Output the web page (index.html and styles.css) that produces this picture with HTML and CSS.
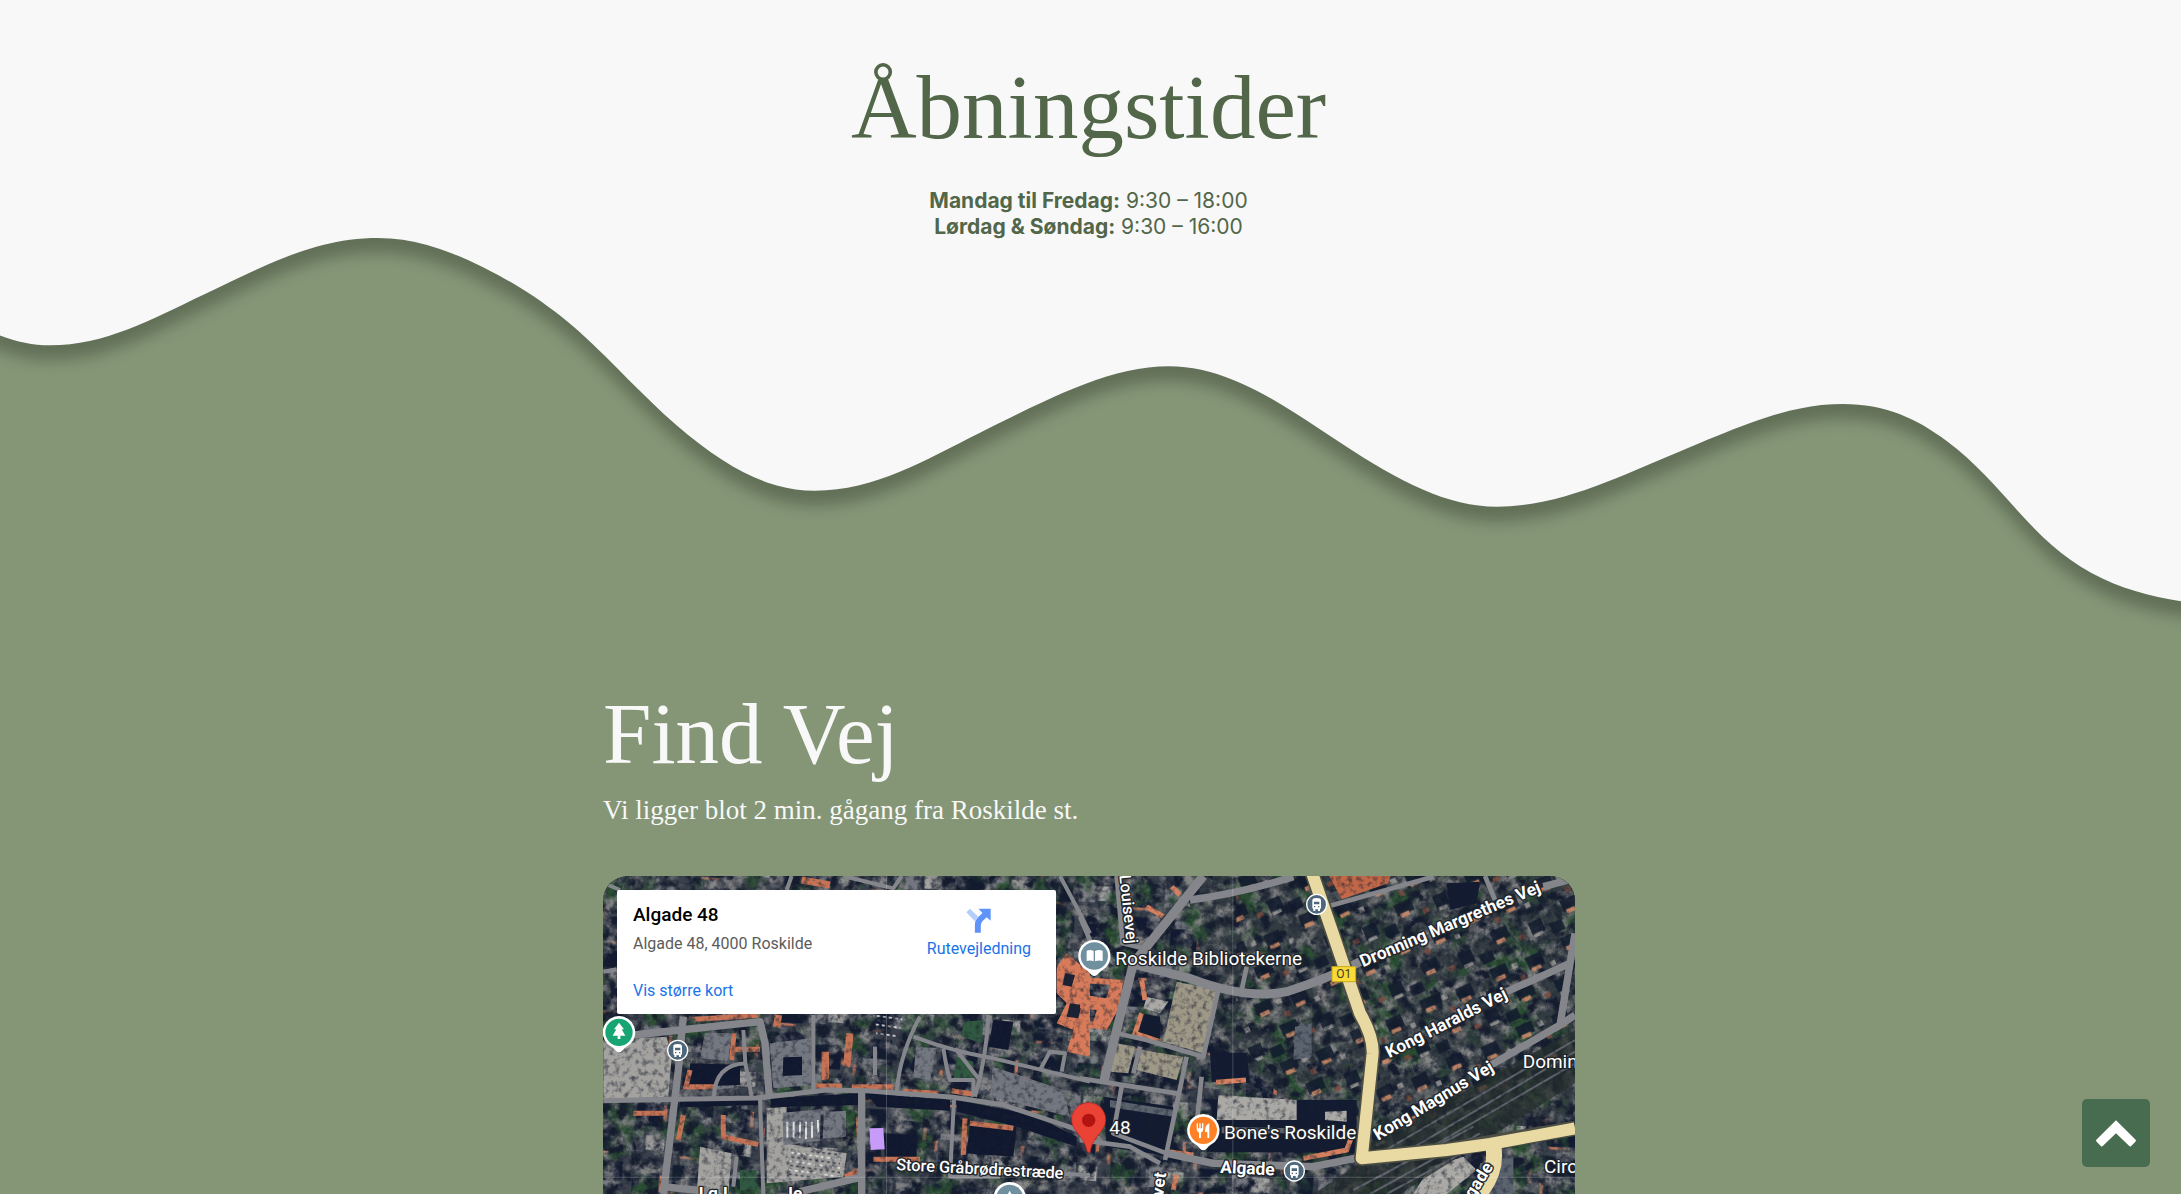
FILE: index.html
```html
<!DOCTYPE html>
<html lang="da">
<head>
<meta charset="utf-8">
<meta name="viewport" content="width=device-width, initial-scale=1">
<title>Åbningstider og Find Vej</title>
<link rel="stylesheet" href="styles.css">
</head>
<body>
<main class="page">
  <section class="hours">
    <h1 class="display hours-title">Åbningstider</h1>
    <p class="hours-list"><strong>Mandag til Fredag:</strong> 9:30 – 18:00<br><strong>Lørdag &amp; Søndag:</strong> 9:30 – 16:00</p>
  </section>

  <svg class="wave" viewBox="0 230 2181 380" aria-hidden="true">
    <path fill="#f8f8f8" d="M-40 200V318L0 335.500C17 342 33 345.300 50 345.300C105 345.300 150 320 205 294C265 265.500 315 238 378 238C420 238 460 254.500 498 275C540 297.500 572 323 605 356C639 390 667 419.500 700 444.300C740 474.500 775 490.700 815 490.700C875 490.700 925 460 979 433.300C1050 398 1110 366.300 1169 366.300C1230 366.300 1285 406 1342 443.700C1400 482 1448 506.700 1497 506.700C1555 506.700 1610 481 1669 456C1745 424 1790 404 1843 404C1885 404 1917 418.500 1947 441.300C1975 462 1998 489 2019 512.300C2040 535.500 2062 557 2091 572.700C2120 588.700 2150 596 2181 601.300L2230 610V200Z"/>
  </svg>

  <section class="find">
    <h2 class="display find-title">Find Vej</h2>
    <p class="find-lead">Vi ligger blot 2 min. gågang fra Roskilde st.</p>

    <div class="map">
      <svg class="map-canvas" viewBox="0 0 2916 954" preserveAspectRatio="xMinYMin slice" role="img" aria-label="Satellitkort over Roskilde">
        <defs>
          <filter id="grain" x="0" y="0" width="100%" height="100%" color-interpolation-filters="sRGB">
            <feTurbulence type="fractalNoise" baseFrequency="0.022" numOctaves="5" seed="7"/>
            <feColorMatrix values="0 0 0 0 .52  0 0 0 0 .52  0 0 0 0 .52  3 0 0 0 -1.3"/>
          </filter>
          <filter id="dark" x="0" y="0" width="100%" height="100%" color-interpolation-filters="sRGB">
            <feTurbulence type="fractalNoise" baseFrequency="0.025" numOctaves="5" seed="21"/>
            <feColorMatrix values="0 0 0 0 .08  0 0 0 0 .11  0 0 0 0 .18  0 4 0 0 -1.9"/>
          </filter>
          <filter id="green" x="0" y="0" width="100%" height="100%" color-interpolation-filters="sRGB">
            <feTurbulence type="fractalNoise" baseFrequency="0.01" numOctaves="4" seed="4"/>
            <feColorMatrix values="0 0 0 0 .17  0 0 0 0 .31  0 0 0 0 .2  0 0 5 0 -2.5"/>
          </filter>
          <filter id="speckle" x="0" y="0" width="100%" height="100%" color-interpolation-filters="sRGB">
            <feTurbulence type="fractalNoise" baseFrequency="0.06" numOctaves="3" seed="13"/>
            <feColorMatrix values="0 0 0 0 .1  0 0 0 0 .12  0 0 0 0 .18  1.6 0 0 0 -.75"/>
          </filter>
          <pattern id="houses" width="230" height="190" patternUnits="userSpaceOnUse" patternTransform="rotate(-24)">
            <path fill="#101a2c" d="M14 8h52v34H14zM126 20h50v40h-50zM60 96h54v36H60zM176 118h42v40h-42zM4 146h40v32H4z"/>
            <path fill="#d08b68" d="M22 38h30v13H22zM132 55h30v12h-30zM68 127h28v13H68z"/>
            <path fill="#9c9a98" d="M80 20h18v16H80zM180 156h28v10h-28zM190 60h16v16h-16z"/>
            <path fill="#7c4b3e" d="M90 64h16v16H90zM134 142h20v14h-20z"/>
          </pattern>
          <pattern id="blocks" width="260" height="210" patternUnits="userSpaceOnUse" patternTransform="rotate(4)">
            <path fill="#111a30" d="M10 10h110v60H10zM150 40h80v70h-80zM20 120h90v70H20z"/>
            <path fill="#747780" d="M24 70h90v18H24zM160 16h60v22h-60zM126 126h50v60h-50z"/>
            <path fill="#c0745a" d="M8 90h10v36H8zM232 44h10v50h-10zM28 192h60v8H28z"/>
            <path fill="#a5a4a3" d="M184 136h56v44h-56z"/>
          </pattern>
          <pattern id="cars" width="18" height="26" patternUnits="userSpaceOnUse" patternTransform="rotate(8)">
            <path fill="#e4e4e4" d="M2 3h9v5H2z"/><path fill="#3b414d" d="M4 16h9v5H4z"/>
          </pattern>
          <g id="bus">
            <circle r="30" fill="#4f677b" stroke="#fff" stroke-width="4"/>
            <path fill="#fff" fill-rule="evenodd" d="M-13-12q0-7 13-7t13 7v22q0 3-3 4v6h-6v-5h-8v5h-6v-6q-3-1-3-4zM-8-8V0H8v-8zM-8 5v4h4V5zM4 5v4h4V5z"/>
          </g>
        </defs>

        <rect width="2940" height="960" fill="#3a414c"/>
        <rect width="2940" height="960" fill="url(#blocks)"/>
        <path fill="#333c42" d="M1740 0H2940V700L2300 860L1860 520Z"/>
        <rect width="2940" height="960" filter="url(#green)"/>
        <rect width="2940" height="960" filter="url(#grain)"/>
        <rect width="2940" height="960" filter="url(#dark)"/>
        <path fill="url(#houses)" opacity=".85" d="M1900 0H2940V560L2300 850L1900 500Z"/>

        <g transform="translate(-9 -18)">
          <path fill="#a3a29f" d="M10 510L200 500L215 560L205 680L10 688Z M300 830L395 850L385 972H290Z M500 715L560 710L555 820L740 850L730 920L500 940Z"/>
          <path fill="#737780" d="M315 488L395 490L385 572L300 565Z M510 520L632 505L636 645L520 655Z M548 728L662 718L660 812L550 826Z M672 726L738 722V800L668 806Z M948 530L1010 535L990 632L940 620Z M1178 590L1390 660L1410 740L1170 680Z M350 630L395 632V655L350 658Z"/>
          <path fill="#101830" d="M270 580L420 585V645L265 650Z M550 562L606 560V615L548 618Z M240 690L480 690V705L240 712Z M510 685L780 670V705L515 712Z M800 670L1050 690V722L830 710Z M850 790L950 795V865L855 868Z M1110 760L1250 770L1240 860L1100 850Z M1180 450L1240 455L1225 540L1165 530Z M1070 690L1300 735L1430 800V830L1250 770L1070 725Z"/>
          <g fill="none" stroke="#c77456" stroke-width="15">
            <path d="M285 448L475 436M270 600L258 650H345M402 490L395 570M395 538H480M640 648H725M755 650H880M910 664L1015 670M1055 662L1118 672M370 735V800L475 824M775 740L782 900L735 920M1095 745L1090 855M1110 760L1240 775M820 868H960M100 730H200M250 735L235 810"/>
            <path stroke-width="22" d="M535 435L530 472M750 490L740 590M676 545V630M605 30L690 45"/>
          </g>
          <path fill="#d87b5a" d="M1370 290L1400 250L1470 310V560L1400 545L1420 480L1370 460L1400 400L1370 370Z"/>
          <path fill="#1b2233" d="M1395 310L1425 315L1415 350L1388 345Z M1410 400L1445 405L1435 445L1400 440Z"/>
          <path fill="none" stroke="#e2e0de" stroke-width="6" d="M562 755v48M581 755v48M600 755v48M618 755v52M636 755v48M654 750v40"/>
          <path fill="url(#cars)" d="M575 840L720 850V920L560 925Z M820 435H910L890 520L830 500Z"/>
          <path fill="#315941" d="M1090 455L1150 450L1145 520L1085 500Z M1070 560L1120 575V625H1060Z M420 900H470V960H420Z"/>
        </g>
        <g transform="translate(1431 -18)">
          <path fill="#9e9887" d="M290 335L410 360L370 550L250 515Z M185 540L310 560L290 630L170 600Z M110 520L165 530L145 610L90 605Z"/>
          <path fill="#d87b5a" fill-rule="evenodd" d="M0 320L130 330L120 410L80 480L0 470ZM20 340L90 345L80 385L15 375ZM0 415L50 420L40 455L0 450Z"/>
          <path fill="#c26848" d="M748 18H930L925 40L785 88Z"/>
          <path fill="#121b31" d="M390 545L500 550L510 640L395 635Z M400 690H830V850L380 845Z M70 680L280 710V860L80 830Z M180 430L240 440V515L180 500Z M1100 40L1200 35L1190 100L1110 120Z"/>
          <path fill="#aaa9a5" d="M415 675L650 690V750L410 750Z M735 725L800 722V755L735 750Z M200 380L265 395L240 430L190 415Z M1050 890L1150 860L1190 900L1100 972H1000Z"/>
          <path fill="none" stroke="#d5815f" stroke-width="15" d="M185 430L165 490L240 515M185 330L195 390M408 637L498 630M670 865L800 840L815 800M265 845L340 855M290 915L280 960M200 110L250 140M275 50L300 75"/>
          <path fill="#5b636f" d="M645 470L695 460V560L640 570Z M425 770L640 775V790H425Z M90 690L280 720V740L90 712Z M1200 880L1300 860V972H1190Z"/>
          <path fill="#27302e" d="M850 830L1485 480V640L960 972H700L840 880Z" opacity=".75"/>
          <g fill="none" stroke="#5e636b" stroke-width="6"><path d="M900 850L1485 510M920 880L1485 545M900 920L1485 580M820 960L1180 770M870 972L1200 790M920 972L1210 815"/></g>
        </g>
        <rect width="2940" height="960" filter="url(#speckle)"/>

        <g transform="translate(-9 -18)">
          <g fill="none" stroke="#85868b" stroke-linejoin="round">
            <path stroke-width="22" d="M100 495L240 480L480 455L495 520L508 680M250 440L235 600L190 972M785 665V972M190 950L330 965M600 965L790 920"/>
            <path stroke-width="15" d="M10 692L230 688L470 684L680 660L800 662L1060 682L1210 705L1310 738L1430 778"/>
            <path stroke-width="12" d="M430 480L436 580L455 680M436 580Q345 585 342 680M640 435V660M960 440Q900 550 890 665M940 500Q1060 545 1180 565L1470 635M1165 435Q1160 560 1125 680M1030 535Q1040 600 1050 630H1120V680M1065 535L1135 625M480 690L490 972M1062 690L1050 920H1200M1320 600L1350 545L1395 550L1385 605M575 18L560 60M1380 18Q1430 110 1470 190M730 18L880 55L905 18M25 45L60 60M10 305L50 298M825 530V615M410 860L400 950M1200 905L1470 915"/>
          </g>
          <path fill="#c79bf8" d="M808 775L850 774L854 838L812 840Z"/>
          <path fill="#fff" opacity=".2" d="M858 18h3v954h-3zM9 920h1461v3H9z"/>
        </g>

        <g transform="translate(1431 -18)">
          <g fill="none" stroke="#85868b" stroke-linejoin="round">
            <path stroke-width="27" d="M370 18L160 280L70 640M170 285L330 325Q500 390 620 365Q760 320 840 275"/>
            <path stroke-width="22" d="M330 90Q480 70 640 20M260 850L400 880L700 890L850 860M1280 365L1470 280M1225 590L1440 465L1485 435M1485 190L1440 465M1390 50L1485 25"/>
            <path stroke-width="14" d="M110 18L128 220L210 240M0 140L50 260M110 490L200 510L370 560L415 360M740 110L1060 20M320 560L255 870M0 625L290 670M125 650L100 790L260 850M500 290L485 360M0 810L150 830L240 880M365 620L350 760M180 530L160 610M1215 18L1245 90"/>
          </g>
          <path fill="none" stroke="#4d4f44" stroke-width="46" stroke-linejoin="round" d="M693 0L755 180L840 430Q880 500 878 550L845 865L1100 840L1485 775M1245 850Q1240 920 1180 990"/>
          <path fill="none" stroke="#e9daa4" stroke-width="36" stroke-linejoin="round" d="M693 0L755 180L840 430Q880 500 878 550L845 865L1100 840L1230 822L1485 775"/>
          <path fill="none" stroke="#e9daa4" stroke-width="48" d="M1240 830Q1255 920 1170 1000"/>
          <path fill="#fff" opacity=".2" d="M457 18h3v954h-3zM0 920h1485v3H0z"/>
        </g>

        <g class="map-labels">
          <g transform="translate(-9 -18)">
            <text class="map-street-small" transform="translate(888 900) rotate(3)">Store Gråbrødrestræde</text>
            <text x="296" y="988">Lg.L</text>
            <text x="565" y="988">le</text>
          </g>
          <g transform="translate(1431 -18)">
            <text class="map-street-small" transform="translate(118 16) rotate(84)">Louisevej</text>
            <text transform="translate(849 292) rotate(-23)">Dronning Margrethes Vej</text>
            <text transform="translate(928 565) rotate(-27)">Kong Haralds Vej</text>
            <text transform="translate(894 812) rotate(-31)">Kong Magnus Vej</text>
            <text transform="translate(420 908) rotate(3)">Algade</text>
            <text transform="translate(246 1000) rotate(-82)">rvet</text>
            <text transform="translate(1180 988) rotate(-58)">gade</text>
            <g class="map-places">
              <text x="106" y="284">Roskilde Bibliotekerne</text>
              <text x="432" y="808">Bone's Roskilde</text>
              <text x="88" y="791">48</text>
              <text x="1328" y="594">Domin</text>
              <text x="1392" y="909">Circ</text>
            </g>
          </g>
        </g>

        <g transform="translate(-9 -18)">
          <path fill="#fff" d="M57 438a49 49 0 0 1 34 84q-18 11-26 22q-8 6-16 0q-8-11-26-22a49 49 0 0 1 34-84z"/>
          <circle cx="57" cy="487" r="41" fill="#17a673"/>
          <path fill="#fff" d="M57 458l15 20h-7l11 19H61v10h-8v-10H38l11-19h-7z"/>
          <use href="#bus" x="233" y="541"/>
          <path fill="#fff" d="M1229 936a49 49 0 0 1 49 49h-98a49 49 0 0 1 49-49z"/>
          <circle cx="1229" cy="985" r="41" fill="#71909f"/>
          <path fill="#fff" d="M1229 962l10 20h-20z"/>
        </g>
        <g transform="translate(1431 -18)">
          <use href="#bus" x="710" y="103"/>
          <use href="#bus" x="643" y="903"/>
          <path fill="#fff" d="M43 209a49 49 0 0 1 34 84q-18 11-26 22q-8 6-16 0q-8-11-26-22a49 49 0 0 1 34-84z"/>
          <circle cx="43" cy="258" r="41" fill="#71909f"/>
          <path fill="#fff" d="M20 242q12-5 21 1v31q-10-5-21-1zM45 243q10-6 23-1v31q-12-4-23 1z"/>
          <path fill="#fff" d="M370 732a49 49 0 0 1 34 84q-18 11-26 22q-8 6-16 0q-8-11-26-22a49 49 0 0 1 34-84z"/>
          <circle cx="370" cy="781" r="41" fill="#ff8126"/>
          <path fill="#fff" d="M350 760h4v15h4v-15h4v15h4v-15h4v18q0 8-7 10v16h-6v-16q-7-2-7-10zM375 784q0-20 13-24v44h-6v-18h-7z"/>
          <path fill="#ea4335" stroke="#c5221f" stroke-width="2" d="M26 698a51 51 0 0 1 51 51c0 35-38 48-46 94q-5 10-10 0c-8-46-46-59-46-94a51 51 0 0 1 51-51z"/>
          <circle cx="26" cy="751" r="20" fill="#b31412"/>
          <rect x="756" y="290" width="71" height="45" fill="#f9da36" stroke="#c9a913" stroke-width="3"/>
          <text class="map-shield" x="791" y="325">O1</text>
        </g>
      </svg>

      <div class="map-card">
        <div class="map-card-place">
          <h3 class="map-card-title">Algade 48</h3>
          <p class="map-card-address">Algade 48, 4000 Roskilde</p>
          <a class="map-card-link" href="#kort">Vis større kort</a>
        </div>
        <a class="map-card-route" href="#rute">
          <svg class="route-icon" viewBox="0 0 76 76" aria-hidden="true">
            <path fill="#b5cffb" d="M1 13L12 2L37 26L27 40Z"/>
            <path fill="#5e94f9" d="M27 75V50Q27 38 36 29L50 15L38 2H75V39L63 28L50 40Q45 45 45 54V75Z"/>
          </svg>
          Rutevejledning
        </a>
      </div>
    </div>
  </section>
</main>

<button class="to-top" type="button" aria-label="Til toppen">
  <svg class="to-top-icon" viewBox="0 0 120 80" aria-hidden="true"><path fill="#fff" d="M60 0L119 59Q121 62 118 65L105 78Q102 80 99 77L60 39L21 77Q18 80 15 78L2 65Q-1 62 1 59Z"/></svg>
</button>
</body>
</html>
```
FILE: styles.css
```css
* {
  box-sizing: border-box;
}

body {
  margin: 0;
  background: #849676;
  color: #52664a;
  font-family: Inter, "Liberation Sans", sans-serif;
}

h1,
h2,
h3,
p {
  margin: 0;
}

.page {
  display: flex;
  flex-direction: column;
  min-height: 100vh;
  overflow: hidden;
}

.display {
  font-family: "Liberation Serif", serif;
  font-weight: 400;
  line-height: 96px;
}

.hours {
  position: relative;
  z-index: 1;
  height: 230px;
  padding: 60px 28px 0 24px;
  background: #f8f8f8;
  text-align: center;
}

.hours-title {
  font-size: 91px;
}

.hours-list {
  margin-top: 32px;
  font-size: 21px;
  line-height: 26px;
}

.hours-list strong {
  font-weight: 700;
}

.wave {
  display: block;
  width: 100%;
  overflow: visible;
  filter: drop-shadow(0 15px 7px rgba(0, 0, 0, 0.25));
}

.find {
  width: 975px;
  max-width: 100%;
  margin: 76px auto 0;
  padding-right: 3px;
  color: #f8f8f8;
}

.find-title {
  font-size: 87px;
}

.find-lead {
  margin-top: 12px;
  font-family: "Liberation Serif", serif;
  font-size: 27px;
  line-height: 32px;
}

.map {
  position: relative;
  height: 318px;
  margin-top: 50px;
  overflow: hidden;
  border-radius: 25px 25px 0 0;
  font-family: Roboto, "Liberation Sans", sans-serif;
}

.map-canvas {
  display: block;
  width: 100%;
  height: 100%;
}

.map-labels {
  fill: #fff;
  stroke: #20242b;
  stroke-width: 8px;
  stroke-linejoin: round;
  paint-order: stroke;
  font-size: 52px;
  font-weight: 700;
}

.map-street-small {
  font-size: 49px;
  font-weight: 500;
}

.map-places {
  font-size: 57px;
  font-weight: 400;
}

.map-shield {
  fill: #3c3a2a;
  font-size: 36px;
  text-anchor: middle;
}

.map-card {
  position: absolute;
  top: 14px;
  left: 14px;
  display: flex;
  justify-content: space-between;
  width: 439px;
  height: 124px;
  padding: 13px 25px 0 16px;
  border-radius: 2px;
  background: #fff;
}

.map-card-title {
  color: #000;
  font-size: 19px;
  font-weight: 500;
  line-height: 24px;
}

.map-card-address {
  margin-top: 5px;
  color: #5b5b5b;
  font-size: 16px;
  line-height: 24px;
}

.map-card a {
  color: #1a73e8;
  font-size: 16px;
  line-height: 24px;
  text-decoration: none;
}

.map-card-link {
  display: block;
  margin-top: 23px;
}

.map-card-route {
  display: flex;
  flex-direction: column;
  align-items: center;
  padding-top: 5px;
}

.route-icon {
  width: 25px;
  height: 25px;
  margin-bottom: 4px;
}

.to-top {
  position: fixed;
  right: 31px;
  bottom: 27px;
  z-index: 2;
  display: grid;
  place-items: center;
  width: 68px;
  height: 68px;
  padding: 0;
  border: 0;
  border-radius: 5px;
  background: #486c4f;
  cursor: pointer;
}

.to-top-icon {
  width: 40px;
  height: 27px;
}
```
